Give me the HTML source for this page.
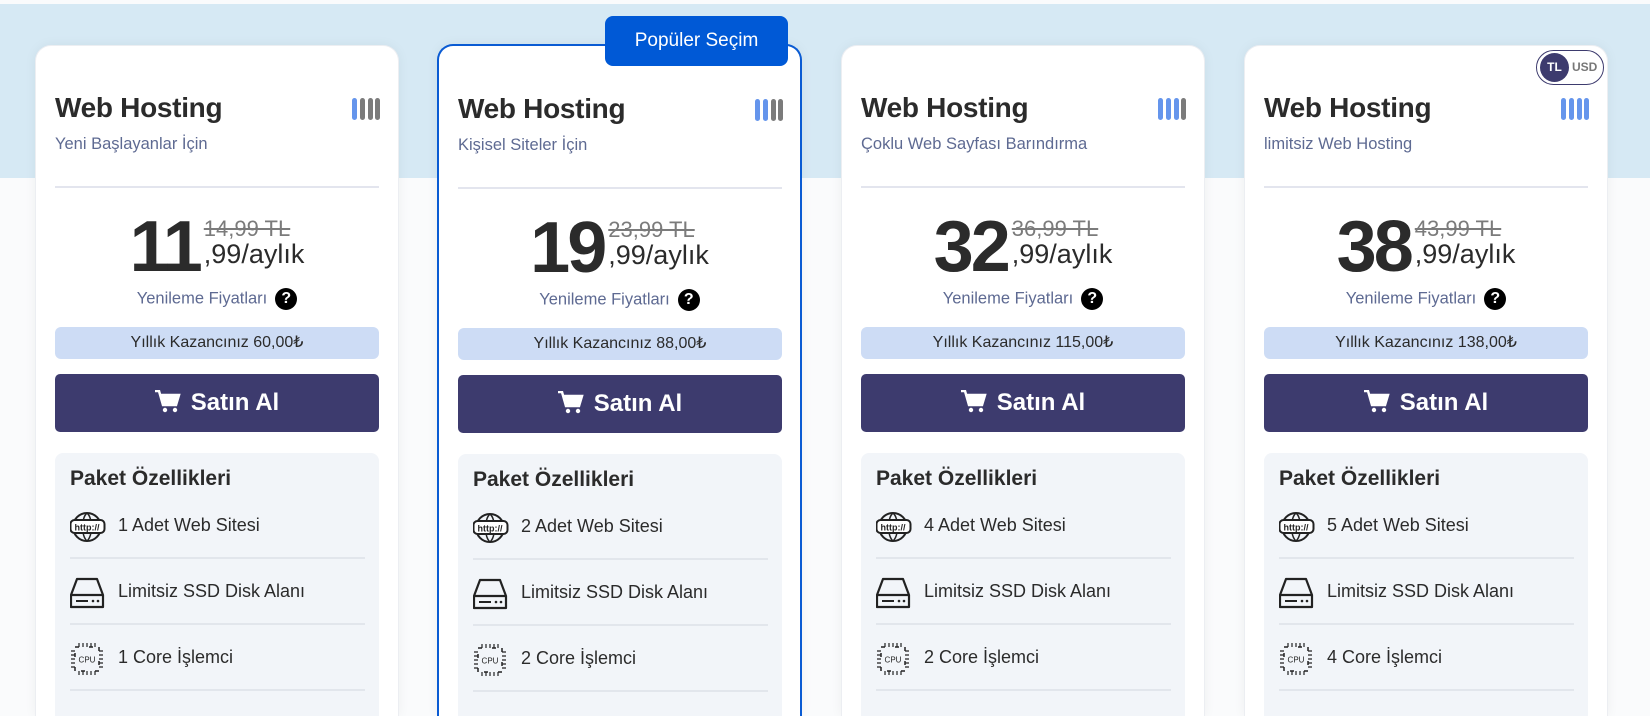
<!DOCTYPE html>
<html style="width:1650px;height:716px;overflow:hidden"><head><meta charset="utf-8"><style>
*{box-sizing:border-box;margin:0;padding:0}
body{width:1650px;height:716px;overflow:hidden;background:#fafbfc;font-family:"Liberation Sans","DejaVu Sans",sans-serif;position:relative}
.band{position:absolute;left:0;top:4px;width:1650px;height:174px;background:#d6e9f4}
.card{position:absolute;top:45px;width:364px;height:671px;background:#fff;border-radius:16px 16px 0 0;box-shadow:0 0 12px rgba(0,0,0,.05);border:1px solid #eceef2;border-bottom:none;overflow:hidden}
.card.pop{border:2px solid #0a5bd3;border-bottom:none;top:44px;width:365px;height:672px}
.t{position:absolute;left:19px;top:46px;font-size:28px;font-weight:bold;color:#2b2b2b;letter-spacing:-.3px}
.s{position:absolute;left:19px;top:89px;font-size:16.5px;color:#5e6a92}
.bars{position:absolute;left:316px;top:52px;width:28px;height:22px}
.bars i{position:absolute;top:0;width:4.5px;height:22px;border-radius:3px;background:#7b7b7b}
.hr{position:absolute;left:19px;top:140px;width:324px;height:2px;background:#e3e5ee}
.price{position:absolute;left:0;width:100%;top:168px;text-align:center;color:#2b2b2b;height:66px}
.pw{display:inline-block;position:relative;height:66px}
.big{font-size:72px;line-height:66px;letter-spacing:-3px;display:inline-block;vertical-align:top;font-weight:bold}
.sm{display:inline-block;vertical-align:top;position:relative;text-align:left;margin-left:4px}
.old{font-size:22px;color:#7b7b7b;text-decoration:line-through;display:block;line-height:22px;margin-top:4px}
.mo{font-size:27px;display:block;line-height:28px}
.ren{position:absolute;left:0;width:100%;top:242px;text-align:center;font-size:16.5px;color:#5e6a92}
.q{display:inline-block;width:22px;height:22px;border-radius:50%;background:#000;color:#fff;font-weight:bold;font-size:16px;line-height:22px;text-align:center;vertical-align:middle;margin-left:8px}
.save{position:absolute;left:19px;top:281px;width:324px;height:32px;border-radius:6px;background:#cddcf5;text-align:center;font-size:16px;line-height:32px;color:#2b2b2b}
.btn{position:absolute;left:19px;top:328px;width:324px;height:58px;border-radius:5px;background:#3d3b6e;color:#fff;text-align:center;font-size:24px;line-height:58px;font-weight:bold}
.btn svg{vertical-align:-3px;margin-right:10px}
.feat{position:absolute;left:19px;top:407px;width:324px;height:264px;border-radius:8px 8px 0 0;background:#f2f5f9}
.ph{position:absolute;left:15px;top:14px;font-size:21px;font-weight:bold;color:#2b2b2b}
.row{position:absolute;left:15px;width:295px;height:66px;border-bottom:2px solid #e2e6ec}
.row span{position:absolute;left:48px;top:22px;font-size:18px;color:#2b2b2b}
.row svg{position:absolute;left:0;top:17px}
.badge{position:absolute;left:605px;top:16px;width:183px;height:50px;border-radius:8px;background:#0059d6;color:#fff;font-size:19px;text-align:center;line-height:50px}
.tog{position:absolute;left:1536px;top:50px;width:68px;height:35px;border:1.5px solid #3d3b6e;border-radius:18px;background:#fff}
.tog b{position:absolute;left:3px;top:2px;width:29px;height:29px;border-radius:50%;background:#3d3b6e;color:#fff;font-size:12px;line-height:29px;text-align:center}
.tog em{position:absolute;left:35px;top:9px;font-style:normal;font-weight:bold;font-size:12px;color:#777}
</style></head><body>
<div class="band"></div>

<svg width="0" height="0" style="position:absolute">
<defs>
<g id="web"><circle cx="17" cy="17" r="14" fill="none" stroke="#222" stroke-width="2"/><path d="M3 17h28M17 3c-6 5-6 23 0 28M17 3c6 5 6 23 0 28" stroke="#222" stroke-width="1.5" fill="none"/><rect x="0.5" y="10" width="34" height="13" rx="4" fill="#fff" stroke="#222" stroke-width="2"/><text x="17" y="20.5" font-size="9" font-weight="bold" text-anchor="middle" font-family="Liberation Sans" fill="#222">http://</text></g>
<g id="ssd"><path d="M7 3h20l6 16v12H1V19z" fill="none" stroke="#222" stroke-width="2.2" stroke-linejoin="round"/><path d="M1 19h32" stroke="#222" stroke-width="2.2"/><path d="M6 25h12" stroke="#222" stroke-width="2"/><circle cx="23" cy="25" r="1.3" fill="#222"/><circle cx="28" cy="25" r="1.3" fill="#222"/></g>
<g id="cpu"><rect x="5" y="5" width="24" height="24" fill="none" stroke="#222" stroke-width="1.5" stroke-dasharray="4 10 4 6"/><path d="M9 1v4M13 1v4M17 1v4M21 1v4M25 1v4M9 29v4M13 29v4M17 29v4M21 29v4M25 29v4M1 9h4M1 13h4M1 17h4M1 21h4M1 25h4M29 9h4M29 13h4M29 17h4M29 21h4M29 25h4" stroke="#222" stroke-width="1.2"/><text x="17" y="20.5" font-size="8" text-anchor="middle" font-family="Liberation Sans" fill="#222">CPU</text></g>
<g id="cart"><path d="M0 1h4l4 14h13l3-10H6" fill="none" stroke="#fff" stroke-width="2.5"/><path d="M6 5h18l-3 10H9z" fill="#fff"/><circle cx="10" cy="20" r="2.2" fill="#fff"/><circle cx="20" cy="20" r="2.2" fill="#fff"/></g>
</defs></svg>

<div class="card" style="left:35px">
<div class="t">Web Hosting</div><div class="s">Yeni Başlayanlar İçin</div>
<div class="bars"><i style="left:0;background:#6595ec"></i><i style="left:8px"></i><i style="left:16px"></i><i style="left:23px"></i></div>
<div class="hr"></div>
<div class="price"><div class="pw"><span class="big">11</span><span class="sm"><span class="old">14,99 TL</span><span class="mo">,99/aylık</span></span></div></div>
<div class="ren">Yenileme Fiyatları<span class="q">?</span></div>
<div class="save">Yıllık Kazancınız 60,00₺</div>
<div class="btn"><svg width="26" height="23"><use href="#cart"/></svg>Satın Al</div>
<div class="feat"><div class="ph">Paket Özellikleri</div>
<div class="row" style="top:40px"><svg width="36" height="34"><use href="#web"/></svg><span>1 Adet Web Sitesi</span></div>
<div class="row" style="top:106px"><svg width="36" height="34"><use href="#ssd"/></svg><span>Limitsiz SSD Disk Alanı</span></div>
<div class="row" style="top:172px"><svg width="36" height="34"><use href="#cpu"/></svg><span>1 Core İşlemci</span></div>
</div></div>

<div class="card pop" style="left:437px">
<div class="t" style="top:47px">Web Hosting</div><div class="s" style="top:90px">Kişisel Siteler İçin</div>
<div class="bars" style="top:53px"><i style="left:0;background:#6595ec"></i><i style="left:8px;background:#6595ec"></i><i style="left:16px"></i><i style="left:23px"></i></div>
<div class="hr" style="top:141px"></div>
<div class="price" style="top:169px"><div class="pw"><span class="big">19</span><span class="sm"><span class="old">23,99 TL</span><span class="mo">,99/aylık</span></span></div></div>
<div class="ren" style="top:243px">Yenileme Fiyatları<span class="q">?</span></div>
<div class="save" style="top:282px">Yıllık Kazancınız 88,00₺</div>
<div class="btn" style="top:329px"><svg width="26" height="23"><use href="#cart"/></svg>Satın Al</div>
<div class="feat" style="top:408px"><div class="ph">Paket Özellikleri</div>
<div class="row" style="top:40px"><svg width="36" height="34"><use href="#web"/></svg><span>2 Adet Web Sitesi</span></div>
<div class="row" style="top:106px"><svg width="36" height="34"><use href="#ssd"/></svg><span>Limitsiz SSD Disk Alanı</span></div>
<div class="row" style="top:172px"><svg width="36" height="34"><use href="#cpu"/></svg><span>2 Core İşlemci</span></div>
</div></div>
<div class="badge">Popüler Seçim</div>

<div class="card" style="left:841px">
<div class="t">Web Hosting</div><div class="s">Çoklu Web Sayfası Barındırma</div>
<div class="bars"><i style="left:0;background:#6595ec"></i><i style="left:8px;background:#6595ec"></i><i style="left:16px;background:#6595ec"></i><i style="left:23px"></i></div>
<div class="hr"></div>
<div class="price"><div class="pw"><span class="big">32</span><span class="sm"><span class="old">36,99 TL</span><span class="mo">,99/aylık</span></span></div></div>
<div class="ren">Yenileme Fiyatları<span class="q">?</span></div>
<div class="save">Yıllık Kazancınız 115,00₺</div>
<div class="btn"><svg width="26" height="23"><use href="#cart"/></svg>Satın Al</div>
<div class="feat"><div class="ph">Paket Özellikleri</div>
<div class="row" style="top:40px"><svg width="36" height="34"><use href="#web"/></svg><span>4 Adet Web Sitesi</span></div>
<div class="row" style="top:106px"><svg width="36" height="34"><use href="#ssd"/></svg><span>Limitsiz SSD Disk Alanı</span></div>
<div class="row" style="top:172px"><svg width="36" height="34"><use href="#cpu"/></svg><span>2 Core İşlemci</span></div>
</div></div>

<div class="card" style="left:1244px">
<div class="t">Web Hosting</div><div class="s">limitsiz Web Hosting</div>
<div class="bars"><i style="left:0;background:#6595ec"></i><i style="left:8px;background:#6595ec"></i><i style="left:16px;background:#6595ec"></i><i style="left:23px;background:#6595ec"></i></div>
<div class="hr"></div>
<div class="price"><div class="pw"><span class="big">38</span><span class="sm"><span class="old">43,99 TL</span><span class="mo">,99/aylık</span></span></div></div>
<div class="ren">Yenileme Fiyatları<span class="q">?</span></div>
<div class="save">Yıllık Kazancınız 138,00₺</div>
<div class="btn"><svg width="26" height="23"><use href="#cart"/></svg>Satın Al</div>
<div class="feat"><div class="ph">Paket Özellikleri</div>
<div class="row" style="top:40px"><svg width="36" height="34"><use href="#web"/></svg><span>5 Adet Web Sitesi</span></div>
<div class="row" style="top:106px"><svg width="36" height="34"><use href="#ssd"/></svg><span>Limitsiz SSD Disk Alanı</span></div>
<div class="row" style="top:172px"><svg width="36" height="34"><use href="#cpu"/></svg><span>4 Core İşlemci</span></div>
</div></div>
<div class="tog"><b>TL</b><em>USD</em></div>
</body></html>
